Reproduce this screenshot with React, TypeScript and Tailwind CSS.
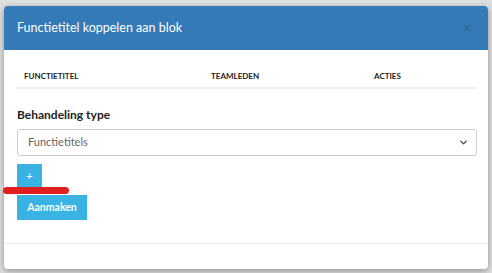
import { ChevronDown, X } from 'lucide-react'

export default function App() {
  return (
    <div className="relative w-[492px] h-[273px] overflow-hidden bg-[#dedede] pt-[6px] pl-[4px] font-['Lato',sans-serif]">
      {/* modal */}
      <div className="w-[484px] h-[263px] bg-white rounded-[4px] shadow-[0_2px_6px_rgba(0,0,0,0.35)] flex flex-col">
        <div className="h-[44px] bg-[#337ab7] rounded-t-[4px] pl-[13px] pr-[16px] flex items-center justify-between">
          <span className="text-white text-[12.5px]">Functietitel koppelen aan blok</span>
          <X className="w-[10px] h-[10px] text-[#2c689c]" strokeWidth={3} />
        </div>

        <div className="pl-[13px] pr-[11px] pt-[15px] flex-1 border-b border-[#e5e5e5]">
          {/* table head */}
          <div className="flex h-[24px] items-center border-b-2 border-[#eeeeee] text-[8px] font-bold text-[#222] uppercase">
            <div className="w-[187px] px-[7px]">Functietitel</div>
            <div className="w-[163px] px-[7px]">Teamleden</div>
            <div className="flex-1 px-[7px]">Acties</div>
          </div>

          <div className="mt-[17px] text-[12px] font-bold text-[#222] leading-[18px]">Behandeling type</div>

          <div className="mt-[5px] h-[27px] border border-[#cccccc] rounded-[3px] px-[10px] flex items-center justify-between text-[11px] text-[#666]">
            <span>Functietitels</span>
            <ChevronDown className="w-[11px] h-[11px] text-[#444] -mr-[3px]" strokeWidth={3} />
          </div>

          <div className="mt-[8px] w-[25px] h-[24px] bg-[#38b3e4] text-white text-[11px] flex items-center justify-center">+</div>

          <div className="mt-[7px] w-[70px] h-[25px] bg-[#38b3e4] text-white text-[10.5px] font-bold flex items-center justify-center">
            Aanmaken
          </div>
        </div>

        <div className="h-[25px]" />
      </div>

      {/* red mark */}
      <div className="absolute left-[3px] top-[187px] w-[66px] h-[7px] rounded-full bg-[#e21f1f]" />
    </div>
  )
}
